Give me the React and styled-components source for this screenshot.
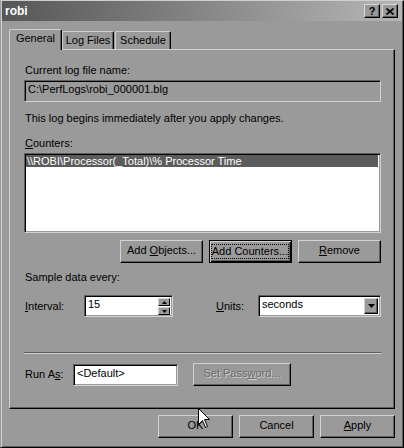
import styled, { createGlobalStyle } from "styled-components";

const GlobalStyle = createGlobalStyle`
  body {
    margin: 0;
    background: #9a9a9a;
    font-family: "Liberation Sans", Arial, sans-serif;
    font-size: 11px;
    color: #000;
  }
`;

const Window = styled.div`
  position: relative;
  width: 404px;
  height: 448px;
  box-sizing: border-box;
  display: flex;
  flex-direction: column;
  background: #9a9a9a;
  border-top: 1px solid #cfcfcf;
  border-left: 1px solid #9a9a9a;
  border-right: 1px solid #000;
  border-bottom: 1px solid #000;
  box-shadow: inset 1px 0 0 #cfcfcf, inset -1px -1px 0 #5e5e5e;
  padding: 0 1px 1px 1px;
  overflow: hidden;
`;

const TitleBar = styled.div`
  height: 20px;
  display: flex;
  align-items: center;
  padding: 0 4px 0 3px;
  background: linear-gradient(to right, #565656, #b6b6b6);
`;

const Title = styled.span`
  color: #fff;
  font-weight: bold;
  font-size: 12px;
`;

const CaptionButtons = styled.div`
  margin-left: auto;
  display: flex;
  gap: 2px;
`;

const CaptionButton = styled.div`
  width: 16px;
  height: 14px;
  box-sizing: border-box;
  display: flex;
  align-items: center;
  justify-content: center;
  background: #9a9a9a;
  border-top: 1px solid #d8d8d8;
  border-left: 1px solid #d8d8d8;
  border-right: 1px solid #000;
  border-bottom: 1px solid #000;
  box-shadow: inset -1px -1px 0 #5e5e5e;
  font-weight: bold;
  font-size: 11px;
  line-height: 12px;
`;

const Body = styled.div`
  flex: 1;
  display: flex;
  flex-direction: column;
  padding: 8px 7px 0 7px;
`;

const TabStrip = styled.div`
  display: flex;
  align-items: flex-end;
  height: 20px;
  position: relative;
  z-index: 1;
`;

const Tab = styled.div`
  box-sizing: border-box;
  width: ${(p) => p.$w}px;
  height: ${(p) => (p.$active ? 21 : 18)}px;
  margin-bottom: ${(p) => (p.$active ? -1 : 0)}px;
  margin-right: ${(p) => (p.$gap ? 1 : 0)}px;
  padding-top: 2px;
  text-align: center;
  line-height: 13px;
  background: #9a9a9a;
  border-top: 1px solid #cfcfcf;
  border-left: 1px solid #cfcfcf;
  border-right: 1px solid #000;
  border-radius: 2px 2px 0 0;
  box-shadow: inset -1px 0 0 #5e5e5e;
`;

const Panel = styled.div`
  box-sizing: border-box;
  height: 360px;
  display: flex;
  flex-direction: column;
  padding: 0 13px 0 14px;
  border-top: 1px solid #cfcfcf;
  border-left: 1px solid #cfcfcf;
  border-right: 1px solid #000;
  border-bottom: 1px solid #000;
  box-shadow: inset -1px -1px 0 #5e5e5e;
`;

const Label = styled.div`
  line-height: 13px;
  margin-top: ${(p) => p.$mt || 0}px;
  padding-left: 1px;
  white-space: nowrap;
`;

const Sunken = styled.div`
  box-sizing: border-box;
  height: ${(p) => p.$h || 22}px;
  width: ${(p) => (p.$w ? `${p.$w}px` : "auto")};
  margin-top: ${(p) => p.$mt || 0}px;
  position: relative;
  background: ${(p) => (p.$white ? "#fff" : "#9a9a9a")};
  border-top: 1px solid #5e5e5e;
  border-left: 1px solid #5e5e5e;
  border-right: 1px solid #d2d2d2;
  border-bottom: 1px solid #d2d2d2;
  box-shadow: inset 1px 1px 0 #000, inset -1px -1px 0 #9a9a9a;
  padding: 2px 2px 0 3px;
  line-height: 13px;
  white-space: nowrap;
`;

const ListBox = styled(Sunken)`
  padding: 1px 2px 0 1px;
`;

const SelectedRow = styled.div`
  height: 12px;
  line-height: 12px;
  padding-left: 1px;
  background: #5c5c5c;
  color: #fff;
`;

const ButtonRow = styled.div`
  display: flex;
  justify-content: flex-end;
  gap: 6px;
  margin-top: ${(p) => p.$mt || 0}px;
`;

const Button = styled.div`
  box-sizing: border-box;
  width: ${(p) => p.$w}px;
  height: 23px;
  display: flex;
  align-items: center;
  justify-content: center;
  padding-bottom: 2px;
  background: #9a9a9a;
  border-top: 1px solid #d2d2d2;
  border-left: 1px solid #d2d2d2;
  border-right: 1px solid #000;
  border-bottom: 1px solid #000;
  box-shadow: inset -1px -1px 0 #5e5e5e;
  line-height: 13px;
  white-space: nowrap;
  color: ${(p) => (p.$disabled ? "#6c6c6c" : "#000")};
  text-shadow: ${(p) => (p.$disabled ? "1px 1px 0 #d2d2d2" : "none")};
`;

const DefaultButton = styled(Button)`
  border: 1px solid #000;
  padding: 3px 4px 3px 3px;
  box-shadow: inset 1px 1px 0 #d2d2d2, inset -1px -1px 0 #000,
    inset -2px -2px 0 #5e5e5e;
`;

const FocusRing = styled.span`
  flex: 1;
  align-self: stretch;
  display: flex;
  align-items: center;
  justify-content: center;
  padding-bottom: 1px;
  border: 1px dotted #000;
`;

const Key = styled.u`
  text-decoration: underline;
  text-underline-offset: 1px;
`;

const FieldRow = styled.div`
  display: flex;
  align-items: center;
  margin-top: ${(p) => p.$mt || 0}px;
`;

const FieldLabel = styled.div`
  width: ${(p) => p.$w}px;
  margin-left: ${(p) => p.$ml || 0}px;
  padding-left: 1px;
  box-sizing: border-box;
  line-height: 13px;
  white-space: nowrap;
`;

const Spinner = styled.div`
  position: absolute;
  right: 2px;
  top: 2px;
  display: flex;
  flex-direction: column;
  gap: 1px;
`;

const SpinButton = styled.div`
  width: 12px;
  height: 8px;
  box-sizing: border-box;
  display: flex;
  align-items: center;
  justify-content: center;
  background: #9a9a9a;
  border-top: 1px solid #d2d2d2;
  border-left: 1px solid #d2d2d2;
  border-right: 1px solid #000;
  border-bottom: 1px solid #000;
`;

const DropButton = styled.div`
  position: absolute;
  right: 2px;
  top: 2px;
  width: 14px;
  height: 16px;
  box-sizing: border-box;
  display: flex;
  align-items: center;
  justify-content: center;
  background: #9a9a9a;
  border-top: 1px solid #d2d2d2;
  border-left: 1px solid #d2d2d2;
  border-right: 1px solid #000;
  border-bottom: 1px solid #000;
  box-shadow: inset -1px -1px 0 #5e5e5e;
`;

const Separator = styled.div`
  margin-top: ${(p) => p.$mt || 0}px;
  height: 1px;
  background: #5e5e5e;
  border-bottom: 1px solid #cfcfcf;
`;

const Footer = styled.div`
  display: flex;
  justify-content: flex-end;
  gap: 6px;
  margin-top: 6px;
`;

const Cursor = styled.svg`
  position: absolute;
  left: 197px;
  top: 407px;
`;

const App = () => {
  return (
    <>
      <GlobalStyle />
      <Window>
        <TitleBar>
          <Title>robi</Title>
          <CaptionButtons>
            <CaptionButton>?</CaptionButton>
            <CaptionButton>
              <svg width="8" height="7" viewBox="0 0 8 7">
                <path d="M0.5 0.5 L7.5 6.5 M7.5 0.5 L0.5 6.5" stroke="#000" strokeWidth="1.6" />
              </svg>
            </CaptionButton>
          </CaptionButtons>
        </TitleBar>

        <Body>
          <TabStrip>
            <Tab $active $w={53}>General</Tab>
            <Tab $w={52} $gap>Log Files</Tab>
            <Tab $w={56}>Schedule</Tab>
          </TabStrip>

          <Panel>
            <Label $mt={14}>Current log file name:</Label>
            <Sunken $mt={3}>C:\PerfLogs\robi_000001.blg</Sunken>
            <Label $mt={10}>This log begins immediately after you apply changes.</Label>
            <Label $mt={12}>
              <Key>C</Key>ounters:
            </Label>
            <ListBox $white $h={80} $mt={3}>
              <SelectedRow>\\ROBI\Processor(_Total)\% Processor Time</SelectedRow>
            </ListBox>

            <ButtonRow $mt={7}>
              <Button $w={83}>
                <span>
                  Add <Key>O</Key>bjects...
                </span>
              </Button>
              <DefaultButton $w={83}>
                <FocusRing>Add Counters...</FocusRing>
              </DefaultButton>
              <Button $w={83}>
                <span>
                  <Key>R</Key>emove
                </span>
              </Button>
            </ButtonRow>

            <Label $mt={8}>Sample data every:</Label>

            <FieldRow $mt={11}>
              <FieldLabel $w={60}>
                <Key>I</Key>nterval:
              </FieldLabel>
              <Sunken $white $w={89}>
                15
                <Spinner>
                  <SpinButton>
                    <svg width="5" height="3" viewBox="0 0 5 3">
                      <path d="M2.5 0 L5 3 L0 3 Z" fill="#000" />
                    </svg>
                  </SpinButton>
                  <SpinButton>
                    <svg width="5" height="3" viewBox="0 0 5 3">
                      <path d="M0 0 L5 0 L2.5 3 Z" fill="#000" />
                    </svg>
                  </SpinButton>
                </Spinner>
              </Sunken>
              <FieldLabel $w={43} $ml={42}>
                <Key>U</Key>nits:
              </FieldLabel>
              <Sunken $white $w={123}>
                seconds
                <DropButton>
                  <svg width="7" height="4" viewBox="0 0 7 4">
                    <path d="M0 0 L7 0 L3.5 4 Z" fill="#000" />
                  </svg>
                </DropButton>
              </Sunken>
            </FieldRow>

            <Separator $mt={35} />

            <FieldRow $mt={9}>
              <FieldLabel $w={49}>
                Run A<Key>s</Key>:
              </FieldLabel>
              <Sunken $white $w={105}>&lt;Default&gt;</Sunken>
              <Button $w={98} $disabled style={{ marginLeft: 15 }}>
                <span>
                  Set Pass<Key>w</Key>ord...
                </span>
              </Button>
            </FieldRow>
          </Panel>

          <Footer>
            <Button $w={75}>OK</Button>
            <Button $w={75}>Cancel</Button>
            <Button $w={75}>
              <span>
                <Key>A</Key>pply
              </span>
            </Button>
          </Footer>
        </Body>

        <Cursor width="13" height="21" viewBox="0 0 13 21">
          <path
            d="M0.5 0.5 L0.5 16.5 L4.5 12.5 L7.5 19.5 L9.5 18.5 L6.5 11.5 L11.5 11.5 Z"
            fill="#fff"
            stroke="#000"
            strokeWidth="1"
          />
        </Cursor>
      </Window>
    </>
  );
};

export default App;
